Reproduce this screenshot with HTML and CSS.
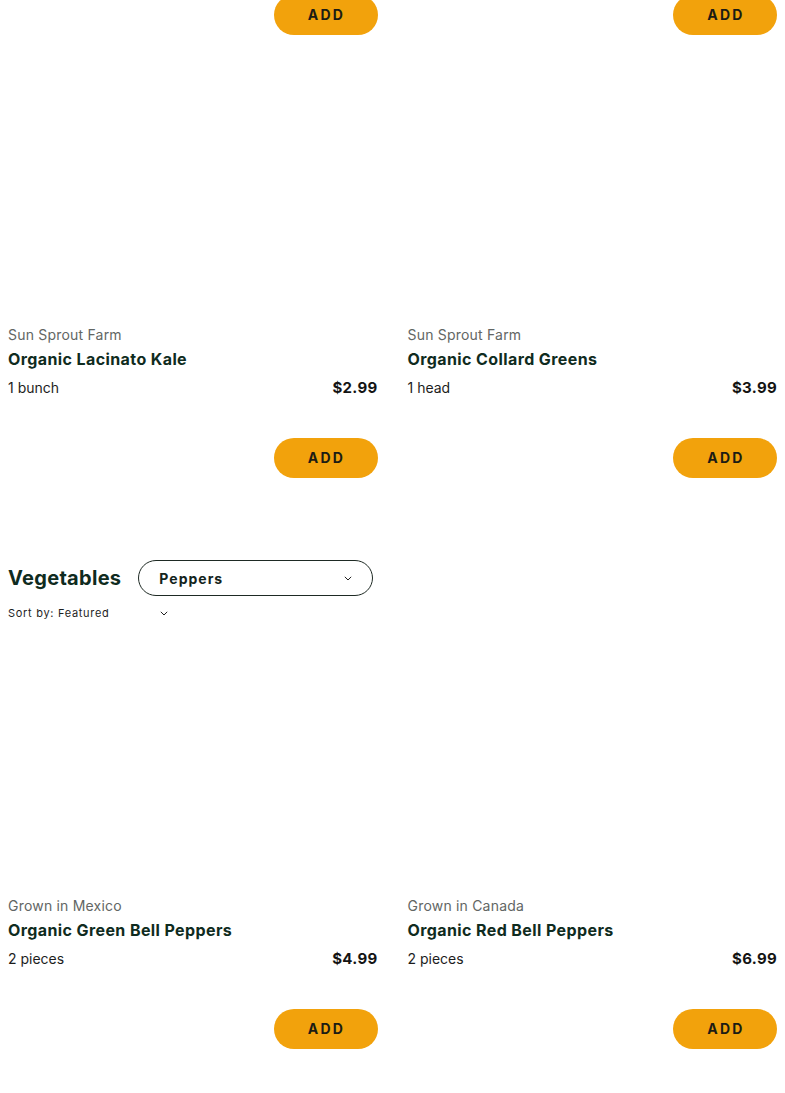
FILE: index.html
```html
<!DOCTYPE html>
<html lang="en">
<head>
<meta charset="utf-8">
<title>Vegetables</title>
<link rel="stylesheet" href="styles.css">
</head>
<body>
<main class="page">
  <section class="section section-scrolled">
    <div class="grid">
      <article class="card">
        <div class="card-img"></div>
        <p class="vendor">Sun Sprout Farm</p>
        <h3 class="name">Organic Curly Kale</h3>
        <div class="meta"><span class="unit">1 bunch</span><span class="price">$2.49</span></div>
        <div class="actions"><button class="add">ADD</button></div>
      </article>
      <article class="card">
        <div class="card-img"></div>
        <p class="vendor">Sun Sprout Farm</p>
        <h3 class="name">Organic Swiss Chard</h3>
        <div class="meta"><span class="unit">1 bunch</span><span class="price">$3.49</span></div>
        <div class="actions"><button class="add">ADD</button></div>
      </article>
      <article class="card">
        <div class="card-img"></div>
        <p class="vendor">Sun Sprout Farm</p>
        <h3 class="name">Organic Lacinato Kale</h3>
        <div class="meta"><span class="unit">1 bunch</span><span class="price">$2.99</span></div>
        <div class="actions"><button class="add">ADD</button></div>
      </article>
      <article class="card">
        <div class="card-img"></div>
        <p class="vendor">Sun Sprout Farm</p>
        <h3 class="name">Organic Collard Greens</h3>
        <div class="meta"><span class="unit">1 head</span><span class="price">$3.99</span></div>
        <div class="actions"><button class="add">ADD</button></div>
      </article>
    </div>
  </section>

  <section class="section section-veg">
    <div class="section-head">
      <h2 class="section-title">Vegetables</h2>
      <div class="select">
        <span class="select-label">Peppers</span>
        <svg class="chev" width="8" height="5" viewBox="0 0 8 5"><path d="M0.8 0.8 L4 4 L7.2 0.8" fill="none" stroke="#222" stroke-width="1"/></svg>
      </div>
    </div>
    <div class="sort">
      <span class="sort-label">Sort by: Featured</span>
      <svg class="chev" width="8" height="5" viewBox="0 0 8 5"><path d="M0.8 0.8 L4 4 L7.2 0.8" fill="none" stroke="#222" stroke-width="1"/></svg>
    </div>
    <div class="grid grid-veg">
      <article class="card">
        <div class="card-img"></div>
        <p class="vendor">Grown in Mexico</p>
        <h3 class="name">Organic Green Bell Peppers</h3>
        <div class="meta"><span class="unit">2 pieces</span><span class="price">$4.99</span></div>
        <div class="actions"><button class="add">ADD</button></div>
      </article>
      <article class="card">
        <div class="card-img"></div>
        <p class="vendor">Grown in Canada</p>
        <h3 class="name">Organic Red Bell Peppers</h3>
        <div class="meta"><span class="unit">2 pieces</span><span class="price">$6.99</span></div>
        <div class="actions"><button class="add">ADD</button></div>
      </article>
    </div>
  </section>
</main>
</body>
</html>
```
FILE: styles.css
```css
* { box-sizing: border-box; }
html, body { margin: 0; padding: 0; background: #fff; }
body {
  font-family: Inter, "Noto Sans", Roboto, sans-serif;
  color: #1c1c1c;
  overflow: hidden;
}
.page {
  padding: 0 8px;
  margin-top: -384px;
}
.grid {
  display: grid;
  grid-template-columns: 1fr 1fr;
  column-gap: 30px;
  row-gap: 24px;
}
.card { display: flex; flex-direction: column; }
.card-img { height: 258px; margin-bottom: 8px; background: #fff; }
.vendor {
  margin: 0;
  font-size: 14px;
  line-height: 20px;
  color: #626664;
  letter-spacing: 0.2px;
}
.name {
  margin: 2px 0 0;
  font-size: 16px;
  line-height: 24px;
  font-weight: 700;
  color: #0f2b20;
  letter-spacing: 0.4px;
}
.meta {
  margin-top: 7px;
  display: flex;
  justify-content: space-between;
  align-items: center;
  line-height: 20px;
}
.unit { font-size: 14px; color: #1d1d1d; }
.price { font-size: 15px; font-weight: 700; color: #141414; letter-spacing: 0.3px; }
.actions { margin-top: 40px; display: flex; justify-content: flex-end; }
.add {
  width: 104px;
  height: 40px;
  border: 0;
  border-radius: 20px;
  background: #f2a20c;
  color: #1c1c14;
  font-family: inherit;
  font-size: 14px;
  font-weight: 700;
  letter-spacing: 2.2px;
  padding: 0 0 2px 2px;
}
.section-veg { margin-top: 82px; }
.section-head { display: flex; align-items: center; gap: 17px; }
.section-title {
  margin: 0;
  font-size: 20px;
  line-height: 36px;
  font-weight: 700;
  color: #0f2b20;
  letter-spacing: 0.3px;
}
.select {
  width: 235px;
  height: 36px;
  border: 1px solid #1e2a24;
  border-radius: 18px;
  display: flex;
  align-items: center;
  justify-content: space-between;
  padding: 0 20px 0 20px;
}
.select-label { font-size: 14px; font-weight: 700; color: #14241c; letter-spacing: 1px; }
.sort {
  margin-top: 8px;
  width: 160px;
  display: flex;
  align-items: center;
  justify-content: space-between;
  line-height: 18px;
}
.sort-label { font-size: 11px; color: #1e1e1e; letter-spacing: 0.7px; }
.chev { display: block; }
.grid-veg { margin-top: 8px; }
```
